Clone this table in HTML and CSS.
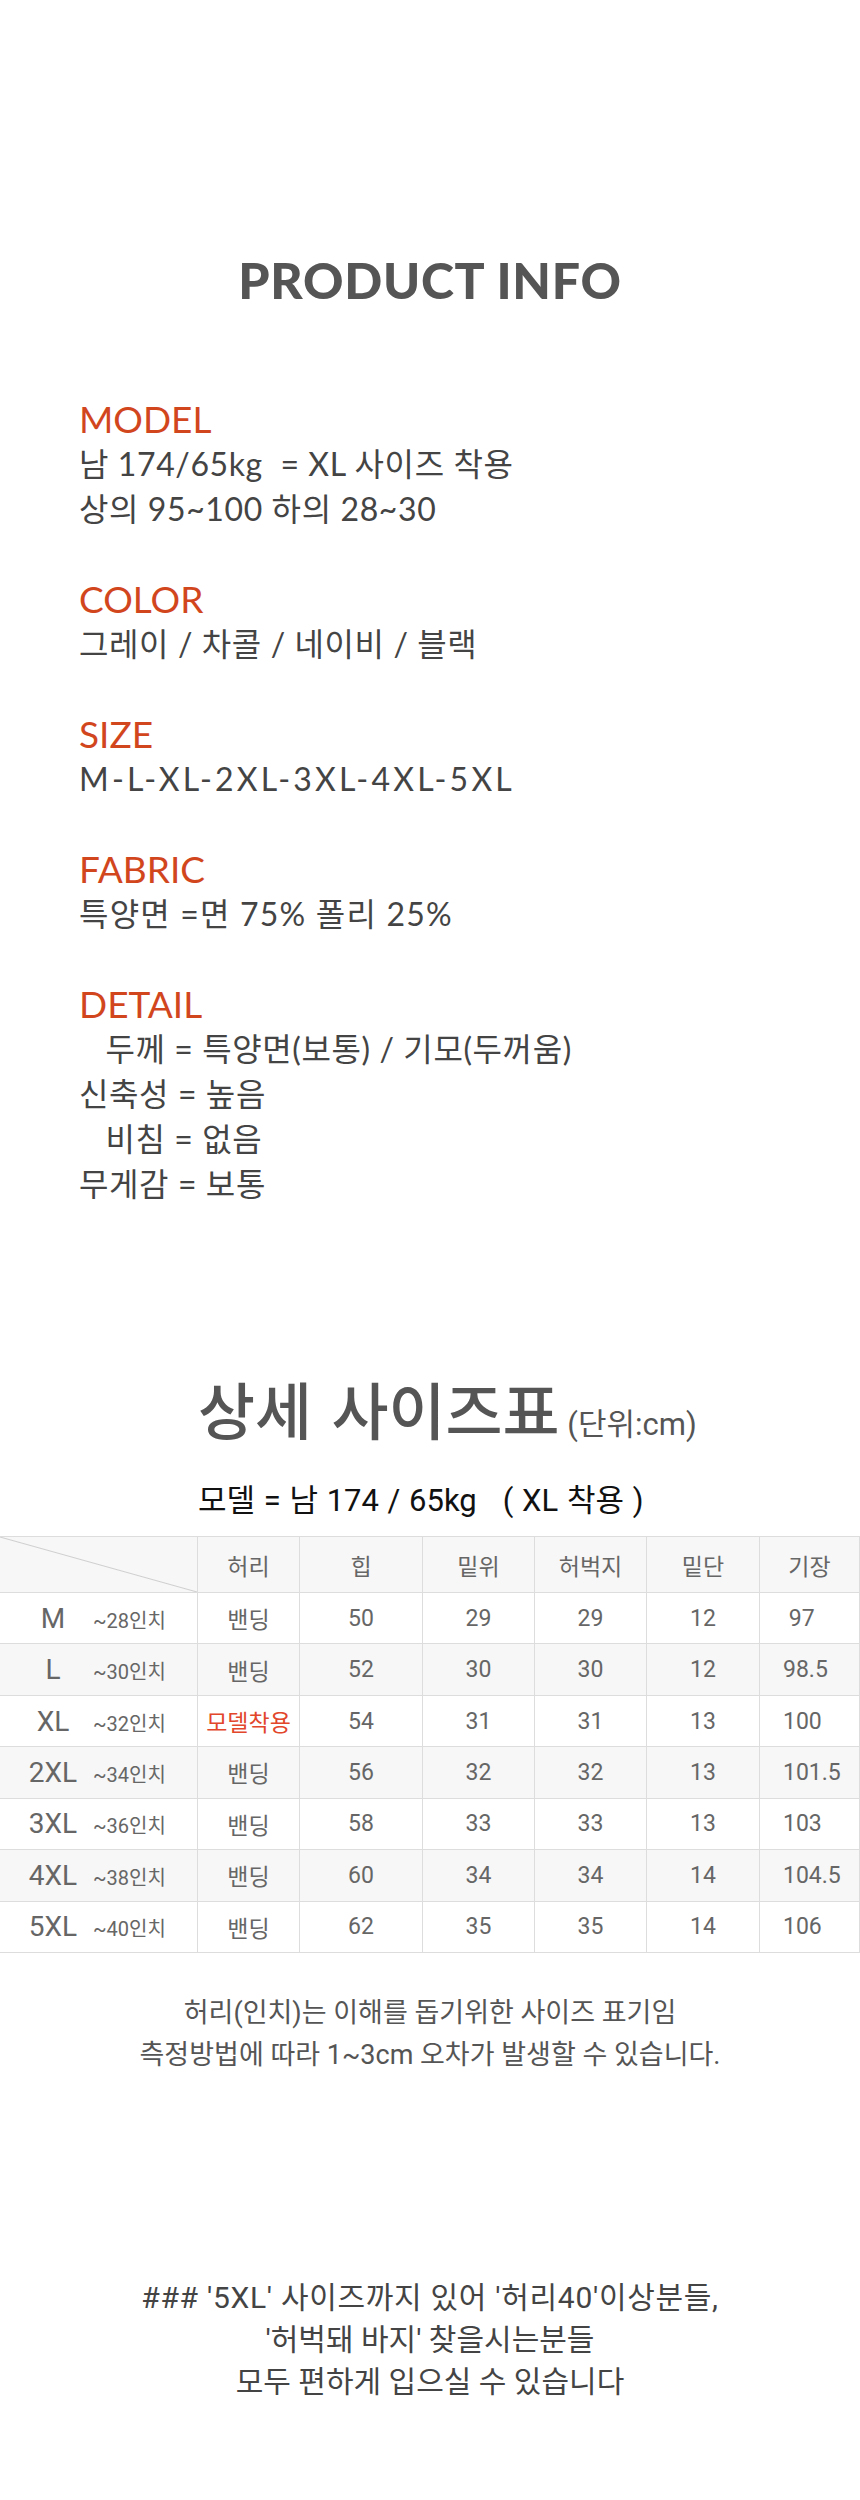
FILE: index.html
```html
<!DOCTYPE html>
<html lang="ko">
<head>
<meta charset="utf-8">
<title>Product Info</title>
<link rel="stylesheet" href="styles.css">
</head>
<body>
<div class="page">
  <section class="info">
    <h1 class="info-title">PRODUCT INFO</h1>
    <div class="spec">
      <div class="group">
        <div class="lbl">MODEL</div>
        <div class="ln">남 174/65kg&nbsp; = XL 사이즈 착용</div>
        <div class="ln">상의 95~100 하의 28~30</div>
      </div>
      <div class="group">
        <div class="lbl">COLOR</div>
        <div class="ln">그레이 / 차콜 / 네이비 / 블랙</div>
      </div>
      <div class="group">
        <div class="lbl">SIZE</div>
        <div class="ln ln-wide">M-L-XL-2XL-3XL-4XL-5XL</div>
      </div>
      <div class="group">
        <div class="lbl">FABRIC</div>
        <div class="ln ln-num">특양면 =면 75% 폴리 25%</div>
      </div>
      <div class="group">
        <div class="lbl">DETAIL</div>
        <div class="ln">&nbsp;&nbsp;&nbsp;두께 = 특양면(보통) / 기모(두꺼움)</div>
        <div class="ln">신축성 = 높음</div>
        <div class="ln">&nbsp;&nbsp;&nbsp;비침 = 없음</div>
        <div class="ln">무게감 = 보통</div>
      </div>
    </div>
  </section>

  <section class="size">
    <h2 class="size-title">상세 사이즈표<span class="unit"> (단위:cm)</span></h2>
    <p class="model">모델 = 남 174 / 65kg &nbsp;&nbsp;( XL 착용 )</p>

    <div class="chart">
      <div class="row head">
        <div class="cell diag"></div>
        <div class="cell">허리</div>
        <div class="cell">힙</div>
        <div class="cell">밑위</div>
        <div class="cell">허벅지</div>
        <div class="cell">밑단</div>
        <div class="cell">기장</div>
      </div>
      <div class="row">
        <div class="cell c0"><span class="szbox"><span class="sz">M</span><span class="inch">~28인치</span></span></div>
        <div class="cell">밴딩</div><div class="cell">50</div><div class="cell">29</div><div class="cell">29</div><div class="cell">12</div><div class="cell last">&nbsp;97</div>
      </div>
      <div class="row alt">
        <div class="cell c0"><span class="szbox"><span class="sz">L</span><span class="inch">~30인치</span></span></div>
        <div class="cell">밴딩</div><div class="cell">52</div><div class="cell">30</div><div class="cell">30</div><div class="cell">12</div><div class="cell last">98.5</div>
      </div>
      <div class="row">
        <div class="cell c0"><span class="szbox"><span class="sz">XL</span><span class="inch">~32인치</span></span></div>
        <div class="cell accent">모델착용</div><div class="cell">54</div><div class="cell">31</div><div class="cell">31</div><div class="cell">13</div><div class="cell last">100</div>
      </div>
      <div class="row alt">
        <div class="cell c0"><span class="szbox"><span class="sz">2XL</span><span class="inch">~34인치</span></span></div>
        <div class="cell">밴딩</div><div class="cell">56</div><div class="cell">32</div><div class="cell">32</div><div class="cell">13</div><div class="cell last">101.5</div>
      </div>
      <div class="row">
        <div class="cell c0"><span class="szbox"><span class="sz">3XL</span><span class="inch">~36인치</span></span></div>
        <div class="cell">밴딩</div><div class="cell">58</div><div class="cell">33</div><div class="cell">33</div><div class="cell">13</div><div class="cell last">103</div>
      </div>
      <div class="row alt">
        <div class="cell c0"><span class="szbox"><span class="sz">4XL</span><span class="inch">~38인치</span></span></div>
        <div class="cell">밴딩</div><div class="cell">60</div><div class="cell">34</div><div class="cell">34</div><div class="cell">14</div><div class="cell last">104.5</div>
      </div>
      <div class="row">
        <div class="cell c0"><span class="szbox"><span class="sz">5XL</span><span class="inch">~40인치</span></span></div>
        <div class="cell">밴딩</div><div class="cell">62</div><div class="cell">35</div><div class="cell">35</div><div class="cell">14</div><div class="cell last">106</div>
      </div>
    </div>

    <div class="notes">
      <p>허리(인치)는 이해를 돕기위한 사이즈 표기임</p>
      <p>측정방법에 따라 1~3cm 오차가 발생할 수 있습니다.</p>
    </div>
  </section>

  <section class="promo">
    <p class="promo-lead">### '5XL' 사이즈까지 있어 '허리40'이상분들,</p>
    <p>'허벅돼 바지' 찾을시는분들</p>
    <p>모두 편하게 입으실 수 있습니다</p>
  </section>
</div>
</body>
</html>
```

FILE: styles.css
```css
* { box-sizing: border-box; }

body {
  margin: 0;
  background: #ffffff;
}

.page {
  width: 860px;
  min-height: 2500px;
}

/* ---------- PRODUCT INFO ---------- */
.info {
  padding-top: 250px;
}

.info-title {
  margin: 0 0 86px;
  font-family: "Lato", "Noto Sans CJK KR", sans-serif;
  font-weight: 900;
  font-size: 50px;
  line-height: 60px;
  letter-spacing: 0.7px;
  color: #555555;
  text-align: center;
}

.spec {
  padding-left: 79px;
  font-family: "Lato", "Noto Sans CJK KR", sans-serif;
}

.group + .group {
  margin-top: 45px;
}

.lbl {
  font-size: 37px;
  line-height: 45px;
  color: #d2461e;
}

.ln {
  font-size: 32px;
  line-height: 45px;
  letter-spacing: 0.6px;
  color: #444444;
  white-space: nowrap;
}

.ln-wide {
  letter-spacing: 3.2px;
}

.ln-num {
  letter-spacing: 1.2px;
}

/* ---------- SIZE CHART ---------- */
.size {
  padding-top: 173px;
  font-family: "Roboto", "Noto Sans CJK KR", sans-serif;
}

.size-title {
  margin: 0;
  padding-left: 198px;
  font-size: 62px;
  font-weight: 500;
  line-height: 70px;
  word-spacing: 4px;
  color: #555555;
}

.unit {
  font-size: 31px;
  font-weight: 400;
  line-height: 1;
  word-spacing: 0;
}

.model {
  margin: 32px 0 15px;
  padding-left: 198px;
  font-size: 31px;
  line-height: 40px;
  word-spacing: 1px;
  color: #111111;
}

.chart {
  display: grid;
  grid-template-columns: 198px 102px 123px 112px 112px 113px 100px;
  grid-template-rows: 56px repeat(7, 51.43px);
  border-top: 1px solid #dddddd;
}

.row {
  display: contents;
}

.cell {
  display: flex;
  align-items: center;
  justify-content: center;
  border-right: 1px solid #dddddd;
  border-bottom: 1px solid #dddddd;
  font-size: 23px;
  color: #666666;
  white-space: nowrap;
}

.head > .cell,
.alt > .cell {
  background: #f7f7f7;
}

.head > .diag {
  background: linear-gradient(to top right, #f7f7f7 calc(50% - 1px), #cfcfcf 50%, #f7f7f7 calc(50% + 1px));
}

.c0 {
  justify-content: flex-start;
}

.szbox {
  display: flex;
  align-items: baseline;
}

.sz {
  width: 80px;
  margin-left: 13px;
  text-align: center;
  font-size: 28px;
}

.inch {
  font-size: 20px;
}

.accent {
  color: #e2462b;
}

.last {
  justify-content: flex-start;
  padding-left: 23px;
}

.notes {
  margin-top: 39px;
  text-align: center;
  font-size: 27px;
  line-height: 42px;
  color: #555555;
}

.notes p,
.promo p {
  margin: 0;
}

/* ---------- PROMO ---------- */
.promo {
  margin-top: 201px;
  font-family: "Roboto", "Noto Sans CJK KR", sans-serif;
  text-align: center;
  font-size: 30px;
  line-height: 42px;
  color: #444444;
}

.promo-lead {
  letter-spacing: 0.7px;
}
```
